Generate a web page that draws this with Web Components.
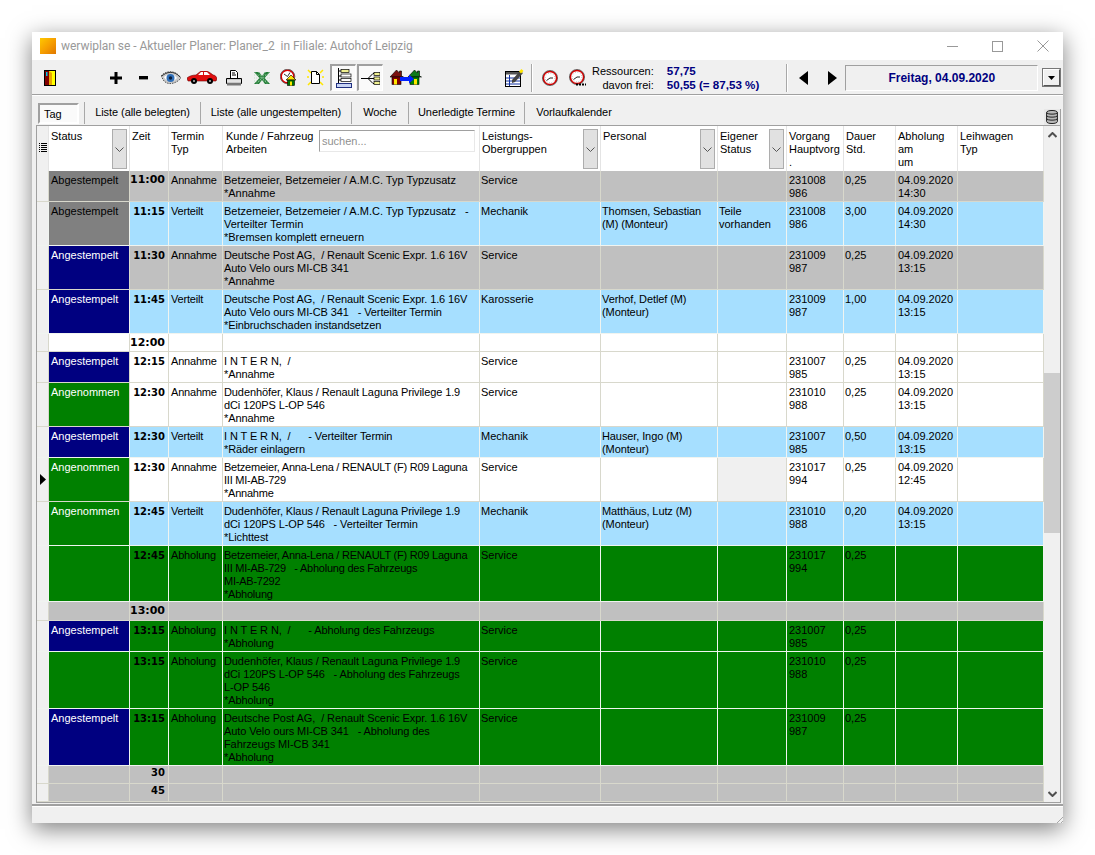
<!DOCTYPE html>
<html>
<head>
<meta charset="utf-8">
<title>werwiplan se</title>
<style>
  html, body { margin: 0; background: #fff; }
  body { padding: 32px; font: 11px "Liberation Sans", Arial, sans-serif; color: #000; }
</style>
</head>
<body>
<wp-window>
  <wp-titlebar slot="title">werwiplan se - Aktueller Planer: Planer_2&nbsp; in Filiale: Autohof Leipzig</wp-titlebar>
  <wp-toolbar slot="toolbar"></wp-toolbar>
  <wp-tabs slot="tabs"></wp-tabs>
  <wp-grid slot="grid"></wp-grid>
</wp-window>

<script>
// small pixel-like toolbar icons
const ICONS = {
  door: '<svg width="12" height="16" viewBox="0 0 12 16"><rect x=".5" y=".5" width="11" height="15" fill="#ffff00" stroke="#000"/><rect x="1" y="1" width="4" height="14" fill="#800000"/><rect x="2" y="2" width="1.500" height="4" fill="#00c8e8"/><path d="M5 1l3 2v12H5z" fill="#c00000" opacity=".35"/></svg>',
  plus: '<svg width="12" height="12" viewBox="0 0 12 12"><path d="M4.500 0h3v4.500H12v3H7.500V12h-3V7.500H0v-3h4.500z" fill="#000"/></svg>',
  minus: '<svg width="9" height="4" viewBox="0 0 9 4"><rect width="9" height="3.400" fill="#000"/></svg>',
  eye: '<svg width="20" height="16" viewBox="0 0 20 16"><path d="M0 6C4 1 14-1 20 8c-4 5-12 8-17 3z" fill="#c9c9c9" stroke="#555" stroke-width="1" stroke-dasharray="1.500 1"/><path d="M3 7c3-3 10-4 13 1-3 4-10 5-13-1z" fill="#fff"/><circle cx="9.500" cy="8" r="4" fill="#2f6fb8"/><circle cx="9.500" cy="8" r="1.700" fill="#0b1d3a"/><path d="M1 6C5 2 13 0 19 7" fill="none" stroke="#333"/></svg>',
  car: '<svg width="30" height="13" viewBox="0 0 30 13"><path d="M0 7c2-2 6-3 9-3l5-4h6c2 1 5 3 6 4 2 0 4 2 4 4l-1 2H1z" fill="#e01010" stroke="#600" stroke-width=".6"/><path d="M11 4l3-3h2v3zM17 1h3l3 3h-6z" fill="#fff"/><circle cx="7" cy="10" r="3" fill="#000"/><circle cx="7" cy="10" r="1" fill="#bbb"/><circle cx="23" cy="10" r="3" fill="#000"/><circle cx="23" cy="10" r="1" fill="#bbb"/></svg>',
  printer: '<svg width="16" height="16" viewBox="0 0 16 16"><path d="M4.500.5h5l2 2v6h-7z" fill="#fff" stroke="#000"/><path d="M6 3h3M6 5h4" stroke="#000"/><path d="M.5 8.500h15v5H.5z" fill="#c8c8c8" stroke="#000"/><path d="M1 11h14" stroke="#fff"/><rect x="1" y="13" width="14" height="2.500" fill="#777"/></svg>',
  excel: '<svg width="16" height="14" viewBox="0 0 16 14"><path d="M0 1h5l3 4 3-4h5l-5.500 6 5.500 6h-5l-3-4-3 4H0l5.500-6z" fill="#1f7a33"/><path d="M1 1.500l13 11M15 1.500L2 12.500M4 1l9 12M12 1L3 13M0 4h16M0 7h16M0 10h16" stroke="#a9d8b2" stroke-width=".7" stroke-dasharray="1 1.200"/></svg>',
  clockhouse: '<svg width="17" height="17" viewBox="0 0 17 17"><circle cx="7.500" cy="7.500" r="6.300" fill="#fff" stroke="#d80000" stroke-width="1.500"/><circle cx="7.500" cy="7.500" r="7.300" fill="none" stroke="#000" stroke-width=".5"/><path d="M7.500 7.500L4 5M7.500 7.500L10 3.500" stroke="#333"/><path d="M6 11l5-5 5 5z" fill="#ffe600" stroke="#000" stroke-width=".6"/><rect x="7.500" y="11" width="7" height="5.500" fill="#007000" stroke="#000" stroke-width=".6"/><rect x="10" y="12.500" width="2" height="4" fill="#ffe600"/></svg>',
  newdoc: '<svg width="17" height="17" viewBox="0 0 17 17"><path d="M1 1l3 3M16 1l-3 3M1 16l3-3M16 16l-3-3M0 8h2M15 8h2" stroke="#ffe600" stroke-width="1.500"/><path d="M4.500 2.500h5l3 3v9h-8z" fill="#fff" stroke="#000"/><path d="M9.500 2.500v3h3" fill="none" stroke="#000"/></svg>',
  tree: '<svg width="17" height="20" viewBox="0 0 17 20"><path d="M3.500 0v17M3.500 3H6M3.500 8H6M3.500 12H6" stroke="#000" fill="none"/><rect x="6" y="1.500" width="8" height="3" fill="#f0f090" stroke="#000" stroke-width=".7"/><rect x="6" y="6" width="10" height="3" fill="#fff" stroke="#000" stroke-width=".7"/><rect x="6" y="10.500" width="10" height="3" fill="#fff" stroke="#000" stroke-width=".7"/><rect x="1.500" y="15.500" width="15" height="4" fill="#c8d4f4" stroke="#203080"/></svg>',
  branch: '<svg width="19" height="13" viewBox="0 0 19 13"><path d="M0 6.500h7M7 6.500l5-5h1M7 6.500h6M7 6.500l5 5h1" stroke="#000" fill="none"/><rect x="13" y=".5" width="6" height="3" fill="#f0f090" stroke="#000" stroke-width=".7"/><rect x="13" y="5" width="6" height="3" fill="#f0f090" stroke="#000" stroke-width=".7"/><rect x="13" y="9.500" width="6" height="3" fill="#f0f090" stroke="#000" stroke-width=".7"/></svg>',
  houses: '<svg width="32" height="15" viewBox="0 0 32 15"><path d="M0 7l6.500-7 3 3V1h2v5l2 1z" fill="#7a1010" stroke="#000" stroke-width=".6"/><rect x="2" y="7" width="9" height="7.500" fill="#800000" stroke="#000" stroke-width=".6"/><rect x="4" y="9" width="3" height="5.500" fill="#ffe600"/><path d="M18 7l6.500-7 3 3V1h2v5l2 1z" fill="#0e7a1a" stroke="#000" stroke-width=".6"/><rect x="20" y="7" width="9" height="7.500" fill="#008000" stroke="#000" stroke-width=".6"/><rect x="24" y="9" width="3" height="5.500" fill="#ffe600"/><path d="M10 7h9V4.500l5 4.500-5 4.500V11h-9z" fill="#0020ff"/></svg>',
  notes: '<svg width="19" height="19" viewBox="0 0 19 19"><rect x=".5" y="3.500" width="15" height="15" fill="#fff" stroke="#000"/><rect x="1" y="4" width="14" height="2.500" fill="#555"/><path d="M4.500 7v11M1 10h14M1 13h14M1 16h14" stroke="#1030a0"/><path d="M7 12L15 3l3 2-8 9-3 1z" fill="#444"/><path d="M14 3.500L16.500 1l2 2-2.500 2.500z" fill="#ffe600"/></svg>',
  clock: '<svg width="16" height="16" viewBox="0 0 16 16"><circle cx="8" cy="8" r="6.600" fill="#fff" stroke="#d80000" stroke-width="1.500"/><circle cx="8" cy="8" r="7.600" fill="none" stroke="#000" stroke-width=".5"/><circle cx="8" cy="8" r="4.800" fill="none" stroke="#999" stroke-width=".8" stroke-dasharray=".8 1.700"/><path d="M8 8L4.500 10.500M8 8h3" stroke="#222"/></svg>',
  clockdots: '<svg width="17" height="17" viewBox="0 0 17 17"><circle cx="8" cy="8" r="6.600" fill="#fff" stroke="#d80000" stroke-width="1.500"/><circle cx="8" cy="8" r="7.600" fill="none" stroke="#000" stroke-width=".5"/><circle cx="8" cy="8" r="4.800" fill="none" stroke="#999" stroke-width=".8" stroke-dasharray=".8 1.700"/><path d="M8 8L4.500 10.500M8 8h3" stroke="#222"/><path d="M7 15.500h10" stroke="#000" stroke-width="2" stroke-dasharray="2 1"/></svg>',
  left: '<svg width="9" height="14" viewBox="0 0 9 14"><path d="M9 0v14L0 7z" fill="#000"/></svg>',
  right: '<svg width="9" height="14" viewBox="0 0 9 14"><path d="M0 0v14l9-7z" fill="#000"/></svg>',
  db: '<svg width="12" height="14" viewBox="0 0 12 14"><path d="M.6 2.500c0-2.700 10.800-2.700 10.800 0v9c0 2.700-10.800 2.700-10.800 0z" fill="#b8b8b8" stroke="#222"/><path d="M.6 2.500c0 2.200 10.800 2.200 10.800 0M.6 5.500c0 2.200 10.800 2.200 10.800 0M.6 8.500c0 2.200 10.800 2.200 10.800 0" fill="none" stroke="#222"/></svg>',
  chevron: '<svg width="9" height="5" viewBox="0 0 9 5"><path d="M.5.500l4 4 4-4" fill="none" stroke="#555"/></svg>'
};

class WpWindow extends HTMLElement {
  constructor() {
    super();
    this.attachShadow({ mode: 'open' });
    this.shadowRoot.innerHTML = `
      <style>
        :host {
          display: flex;
          flex-direction: column;
          width: 1031px;
          height: 791px;
          background: #f0f0f0;
          box-shadow: 0 6px 22px rgba(0,0,0,.5);
        }
        .status {
          flex: 1;
          position: relative;
          margin-top: 1px;
          border-top: 2px solid #a0a0a0;
          box-shadow: inset 0 1px 0 #fff;
        }
        .grip {
          position: absolute;
          right: 0;
          bottom: 0;
          width: 9px;
          height: 9px;
          background: repeating-linear-gradient(135deg, transparent 0 2px, #a8a8a8 2px 3px);
          clip-path: polygon(100% 0, 100% 100%, 0 100%);
        }
      </style>
      <slot name="title"></slot>
      <slot name="toolbar"></slot>
      <slot name="tabs"></slot>
      <slot name="grid"></slot>
      <div class="status"><div class="grip"></div></div>
    `;
  }
}

class WpTitlebar extends HTMLElement {
  constructor() {
    super();
    this.attachShadow({ mode: 'open' });
    this.shadowRoot.innerHTML = `
      <style>
        :host {
          display: flex;
          align-items: center;
          height: 28px;
          background: #fff;
          color: #999;
          font: 12px Roboto, sans-serif;
          letter-spacing: -.04px;
        }
        .logo {
          width: 16px;
          height: 16px;
          margin: 0 5px 0 8px;
          background: linear-gradient(135deg, #ffc800, #f7a000 50%, #e07800);
        }
        .text { flex: 1; white-space: nowrap; }
        .ctl { width: 45px; height: 28px; display: flex; align-items: center; justify-content: center; }
      </style>
      <div class="logo"></div>
      <div class="text"><slot></slot></div>
      <div class="ctl"><svg width="11" height="11"><path d="M0 5.500h11" stroke="#999"/></svg></div>
      <div class="ctl" style="margin-right:3px"><svg width="11" height="11"><rect x=".5" y=".5" width="10" height="10" fill="none" stroke="#999"/></svg></div>
      <div class="ctl" style="width:40px"><svg width="12" height="12"><path d="M.5.500l11 11M11.500.500l-11 11" stroke="#999"/></svg></div>
    `;
  }
}

class WpToolbar extends HTMLElement {
  constructor() {
    super();
    this.attachShadow({ mode: 'open' });
    // each entry: icon name, box left edge in window coords, box width
    const tools = [
      ['door', 10, 16], ['plus', 76, 16], ['minus', 103, 16], ['eye', 128, 22], ['car', 154, 32],
      ['printer', 193, 18], ['excel', 222, 16], ['clockhouse', 247, 18], ['newdoc', 274, 18]
    ];
    let x = 0;
    const btn = tools.map(([n, left, w]) => {
      const h = `<div class="tool" style="margin-left:${left - x}px;width:${w}px">${ICONS[n]}</div>`;
      x = left + w;
      return h;
    }).join('');
    this.shadowRoot.innerHTML = `
      <style>
        :host {
          display: flex;
          align-items: center;
          height: 35px;
          box-sizing: border-box;
          padding-top: 1px;
          border-bottom: 1px solid #a0a0a0;
          background: #f0f0f0;
          font: 11px "Liberation Sans", Arial, sans-serif;
        }
        .tool { display: flex; align-items: center; justify-content: center; flex: none; }
        .pressed {
          width: 26px;
          height: 27px;
          box-sizing: border-box;
          border: 1px solid;
          border-color: #a0a0a0 #fff #fff #a0a0a0;
          border-width: 2px 1px 1px 2px;
          background: #fafafa;
        }
        .sep { width: 1px; height: 28px; background: #a8a8a8; box-shadow: 1px 0 0 #fff; flex: none; }
        .res { display: grid; grid-template-columns: auto auto; column-gap: 13px; line-height: 14px; margin-left: 6px; }
        .res span:nth-child(odd) { text-align: right; }
        .res b { color: #000080; font-weight: bold; font-size: 11.6px; }
        .date {
          width: 193px;
          height: 26px;
          box-sizing: border-box;
          margin-left: 8px;
          border: 1px solid;
          border-color: #a0a0a0 #fff #fff #a0a0a0;
          display: flex;
          align-items: center;
          justify-content: center;
          color: #000080;
          font-weight: bold;
          font-size: 12px;
        }
        .combo {
          width: 19px;
          height: 19px;
          box-sizing: border-box;
          margin-left: 4px;
          border: 2px solid;
          border-color: #fff #555 #555 #fff;
          outline: 1px solid #777;
          outline-offset: -1px;
          background: #f0f0f0;
          display: flex;
          align-items: center;
          justify-content: center;
        }
      </style>
      ${btn}
      <div class="tool pressed" style="margin-left:6px">${ICONS.tree}</div>
      <div class="tool pressed" style="margin-left:1px">${ICONS.branch}</div>
      <div class="tool" style="margin-left:6px;width:34px">${ICONS.houses}</div>
      <div class="tool" style="margin-left:81px;width:20px">${ICONS.notes}</div>
      <div class="sep" style="margin-left:7px"></div>
      <div class="tool" style="margin-left:10px;width:16px">${ICONS.clock}</div>
      <div class="tool" style="margin-left:11px;width:17px">${ICONS.clockdots}</div>
      <div class="res">
        <span>Ressourcen:</span><b>57,75</b>
        <span>davon frei:</span><b>50,55 (= 87,53 %)</b>
      </div>
      <div class="sep" style="margin-left:27px"></div>
      <div class="tool" style="margin-left:12px;width:9px">${ICONS.left}</div>
      <div class="tool" style="margin-left:20px;width:9px">${ICONS.right}</div>
      <div class="date">Freitag, 04.09.2020</div>
      <div class="combo"><svg width="7" height="4"><path d="M0 0h7L3.500 4z" fill="#000"/></svg></div>
    `;
  }
}

class WpTabs extends HTMLElement {
  constructor() {
    super();
    this.attachShadow({ mode: 'open' });
    const tabs = ['Liste (alle belegten)', 'Liste (alle ungestempelten)', 'Woche', 'Unerledigte Termine', 'Vorlaufkalender'];
    const widths = [116, 151, 57, 116, 99];
    this.shadowRoot.innerHTML = `
      <style>
        :host {
          display: flex;
          align-items: center;
          position: relative;
          height: 30px;
          box-sizing: border-box;
          padding: 5px 0 0 6px;
          border-top: 1px solid #fff;
          background: #f0f0f0;
          font: 11px "Liberation Sans", Arial, sans-serif;
        }
        .active {
          width: 41px;
          height: 21px;
          box-sizing: border-box;
          border: 2px solid;
          border-color: #a0a0a0 #fff #fff #a0a0a0;
          background: #fafafa;
          padding-left: 4px;
          line-height: 19px;
          margin-right: 5px;
        }
        .tab {
          box-sizing: border-box;
          height: 22px;
          line-height: 20px;
          text-align: center;
          white-space: nowrap;
          letter-spacing: -.06px;
          border-left: 1px solid #a8a8a8;
        }
        .tab:last-of-type { border-right: 1px solid #a8a8a8; }
        .db {
          position: absolute;
          right: 2px;
          bottom: 0;
          width: 16px;
          height: 16px;
          background: #e8e8e8;
          border-right: 1px solid #a0a0a0;
          display: flex;
          align-items: center;
          justify-content: center;
        }
      </style>
      <div class="active">Tag</div>
      ${tabs.map((t, i) => `<div class="tab" style="width:${widths[i]}px">${t}</div>`).join('')}
      <div class="db">${ICONS.db}</div>
    `;
  }
}

class WpHeader extends HTMLElement {
  constructor() {
    super();
    this.attachShadow({ mode: 'open' });
    const drop = `<div class="drop">${ICONS.chevron}</div>`;
    this.shadowRoot.innerHTML = `
      <style>
        :host {
          display: grid;
          grid-template-columns: var(--cols);
          height: 45px;
          background: #fff;
          line-height: 13px;
          color: #000;
        }
        div.c {
          position: relative;
          box-sizing: border-box;
          padding: 4px 0 0 2px;
          border-right: 1px solid #e4e4e4;
          white-space: pre;
          overflow: hidden;
        }
        .ind { background: #f0f0f0; display: flex; align-items: center; justify-content: center; }
        .drop {
          position: absolute;
          right: 2px;
          top: 3px;
          width: 15px;
          height: 40px;
          box-sizing: border-box;
          background: #e1e1e1;
          border: 1px solid #adadad;
          display: flex;
          align-items: center;
          justify-content: center;
        }
        input {
          position: absolute;
          left: 96px;
          top: 4px;
          width: 156px;
          height: 22px;
          box-sizing: border-box;
          border: 1px solid;
          border-color: #a0a0a0 #e8e8e8 #e8e8e8 #a0a0a0;
          padding: 0 2px;
          font: inherit;
          color: #000;
          background: #fff;
        }
        input::placeholder { color: #909090; opacity: 1; }
      </style>
      <div class="c ind" style="padding:0 0 3px"><svg width="8" height="9"><path d="M0 .5h1M2 .5h6M0 2.500h1M2 2.500h6M0 4.500h1M2 4.500h6M0 6.500h1M2 6.500h6M0 8.500h1M2 8.500h6" stroke="#000"/></svg></div>
      <div class="c">Status${drop}</div>
      <div class="c">Zeit</div>
      <div class="c">Termin\nTyp</div>
      <div class="c" style="padding-left:3px">Kunde / Fahrzeug\nArbeiten<input placeholder="suchen..."></div>
      <div class="c">Leistungs-\nObergruppen${drop}</div>
      <div class="c">Personal${drop}</div>
      <div class="c">Eigener\nStatus${drop}</div>
      <div class="c">Vorgang\nHauptvorg\n.</div>
      <div class="c">Dauer\nStd.</div>
      <div class="c">Abholung\nam\num</div>
      <div class="c">Leihwagen\nTyp</div>
    `;
  }
}

const ROW_BG = { grey: '#c0c0c0', blue: '#a6dfff', white: '#fff', green: '#008000' };
const STATUS = {
  Abgestempelt: ['#808080', '#000'],
  Angestempelt: ['#000080', '#fff'],
  Angenommen: ['#008000', '#fff']
};

class WpRow extends HTMLElement {
  constructor() {
    super();
    this.attachShadow({ mode: 'open' });
  }

  set data(d) {
    const line = (d.bg === 'green' || d.bg === 'blue') ? '#f0f4f0' : '#d8d8cc';
    const st = STATUS[d.status];
    const cell = (t, extra, cls) => `<div class="c ${cls || ''}" ${extra ? `style="${extra}"` : ''}>${t || ''}</div>`;
    // ks: letter-spacing of the customer column, names differ in width against the original font
    const ks = d.ks === undefined ? -0.1 : d.ks;
    this.shadowRoot.innerHTML = `
      <style>
        :host {
          display: grid;
          grid-template-columns: var(--cols);
          background: ${ROW_BG[d.bg]};
          line-height: 13px;
          color: #000;
        }
        .c {
          box-sizing: border-box;
          padding: 3px 0 0 2px;
          border-right: 1px solid ${line};
          border-bottom: 1px solid ${line};
          white-space: pre;
          overflow: hidden;
        }
        .tight { padding-left: 1px; }
        .narrow { letter-spacing: -.1px; }
        .typ { letter-spacing: -.2px; }
        .ind { background: #f0f0f0; padding: 0; display: flex; align-items: center; justify-content: center; }
        .time {
          text-align: right;
          padding: 3px 3px 0 0;
          font: bold 10px "DejaVu Sans", sans-serif;
          line-height: 13px;
        }
        .hour { font-size: 11px; padding: 2px 3px 0 0; }
        .quarter { padding-top: 0; }
      </style>
      <div class="c ind">${d.mark ? '<svg width="6" height="11"><path d="M0 0v11l6-5.500z" fill="#000"/></svg>' : ''}</div>
      ${cell(d.status, st ? `background:${st[0]};color:${st[1]}` : '')}
      <div class="c time ${d.hour ? 'hour' : ''} ${d.time.length === 2 ? 'quarter' : ''}">${d.time}</div>
      ${cell(d.typ, '', 'typ')}
      ${cell(d.kunde, `letter-spacing:${ks}px`, 'tight')}
      ${cell(d.leist, '', 'tight')}
      ${cell(d.pers, '', 'tight narrow')}
      ${cell(d.eigen, d.mark ? 'background:#f0f0f0' : '', 'tight')}
      ${cell(d.vorg)}
      ${cell(d.dauer, '', 'tight')}
      ${cell(d.abh)}
      ${cell('')}
    `;
    this.style.height = d.h + 'px';
  }
}

const AB = 'Abgestempelt', AG = 'Angestempelt', AN = 'Angenommen';
const ROWS = [
  { h: 31, bg: 'grey', ks: 0, status: AB, time: '11:00', hour: 1, typ: 'Annahme', kunde: 'Betzemeier, Betzemeier / A.M.C. Typ Typzusatz\n*Annahme', leist: 'Service', vorg: '231008\n986', dauer: '0,25', abh: '04.09.2020\n14:30' },
  { h: 44, bg: 'blue', ks: 0, status: AB, time: '11:15', typ: 'Verteilt', kunde: 'Betzemeier, Betzemeier / A.M.C. Typ Typzusatz   -\nVerteilter Termin\n*Bremsen komplett erneuern', leist: 'Mechanik', pers: 'Thomsen, Sebastian\n(M) (Monteur)', eigen: 'Teile\nvorhanden', vorg: '231008\n986', dauer: '3,00', abh: '04.09.2020\n14:30' },
  { h: 44, bg: 'grey', status: AG, time: '11:30', typ: 'Annahme', kunde: 'Deutsche Post AG,  / Renault Scenic Expr. 1.6 16V\nAuto Velo ours MI-CB 341\n*Annahme', leist: 'Service', vorg: '231009\n987', dauer: '0,25', abh: '04.09.2020\n13:15' },
  { h: 44, bg: 'blue', status: AG, time: '11:45', typ: 'Verteilt', kunde: 'Deutsche Post AG,  / Renault Scenic Expr. 1.6 16V\nAuto Velo ours MI-CB 341   - Verteilter Termin\n*Einbruchschaden instandsetzen', leist: 'Karosserie', pers: 'Verhof, Detlef (M)\n(Monteur)', vorg: '231009\n987', dauer: '1,00', abh: '04.09.2020\n13:15' },
  { h: 18, bg: 'white', time: '12:00', hour: 1 },
  { h: 31, bg: 'white', status: AG, time: '12:15', typ: 'Annahme', kunde: 'I N T E R N,  /\n*Annahme', leist: 'Service', vorg: '231007\n985', dauer: '0,25', abh: '04.09.2020\n13:15' },
  { h: 44, bg: 'white', status: AN, time: '12:30', typ: 'Annahme', kunde: 'Dudenhöfer, Klaus / Renault Laguna Privilege 1.9\ndCi 120PS L-OP 546\n*Annahme', leist: 'Service', vorg: '231010\n988', dauer: '0,25', abh: '04.09.2020\n13:15' },
  { h: 31, bg: 'blue', status: AG, time: '12:30', typ: 'Verteilt', kunde: 'I N T E R N,  /      - Verteilter Termin\n*Räder einlagern', leist: 'Mechanik', pers: 'Hauser, Ingo (M)\n(Monteur)', vorg: '231007\n985', dauer: '0,50', abh: '04.09.2020\n13:15' },
  { h: 44, bg: 'white', ks: -0.23, status: AN, mark: 1, time: '12:30', typ: 'Annahme', kunde: 'Betzemeier, Anna-Lena / RENAULT (F) R09 Laguna\nIII MI-AB-729\n*Annahme', leist: 'Service', vorg: '231017\n994', dauer: '0,25', abh: '04.09.2020\n12:45' },
  { h: 44, bg: 'blue', status: AN, time: '12:45', typ: 'Verteilt', kunde: 'Dudenhöfer, Klaus / Renault Laguna Privilege 1.9\ndCi 120PS L-OP 546   - Verteilter Termin\n*Lichttest', leist: 'Mechanik', pers: 'Matthäus, Lutz (M)\n(Monteur)', vorg: '231010\n988', dauer: '0,20', abh: '04.09.2020\n13:15' },
  { h: 56, bg: 'green', ks: -0.23, time: '12:45', typ: 'Abholung', kunde: 'Betzemeier, Anna-Lena / RENAULT (F) R09 Laguna\nIII MI-AB-729   - Abholung des Fahrzeugs\nMI-AB-7292\n*Abholung', leist: 'Service', vorg: '231017\n994', dauer: '0,25' },
  { h: 19, bg: 'grey', time: '13:00', hour: 1 },
  { h: 31, bg: 'green', status: AG, time: '13:15', typ: 'Abholung', kunde: 'I N T E R N,  /      - Abholung des Fahrzeugs\n*Abholung', leist: 'Service', vorg: '231007\n985', dauer: '0,25' },
  { h: 57, bg: 'green', time: '13:15', typ: 'Abholung', kunde: 'Dudenhöfer, Klaus / Renault Laguna Privilege 1.9\ndCi 120PS L-OP 546   - Abholung des Fahrzeugs\nL-OP 546\n*Abholung', leist: 'Service', vorg: '231010\n988', dauer: '0,25' },
  { h: 57, bg: 'green', status: AG, time: '13:15', typ: 'Abholung', kunde: 'Deutsche Post AG,  / Renault Scenic Expr. 1.6 16V\nAuto Velo ours MI-CB 341   - Abholung des\nFahrzeugs MI-CB 341\n*Abholung', leist: 'Service', vorg: '231009\n987', dauer: '0,25' },
  { h: 18, bg: 'grey', time: '30' },
  { h: 18, bg: 'grey', time: '45' }
];

class WpScrollbar extends HTMLElement {
  constructor() {
    super();
    this.attachShadow({ mode: 'open' });
    this.shadowRoot.innerHTML = `
      <style>
        :host {
          display: flex;
          flex-direction: column;
          width: 17px;
          background: #f0f0f0;
        }
        .arrow { height: 17px; display: flex; align-items: center; justify-content: center; flex: none; }
        .track { flex: 1; padding-top: 230px; }
        .thumb { height: 160px; background: #cdcdcd; }
      </style>
      <div class="arrow"><svg width="9" height="6"><path d="M.5 5L4.500 1l4 4" fill="none" stroke="#505050" stroke-width="2"/></svg></div>
      <div class="track"><div class="thumb"></div></div>
      <div class="arrow"><svg width="9" height="6"><path d="M.5 1l4 4 4-4" fill="none" stroke="#505050" stroke-width="2"/></svg></div>
    `;
  }
}

class WpGrid extends HTMLElement {
  constructor() {
    super();
    this.attachShadow({ mode: 'open' });
    this.shadowRoot.innerHTML = `
      <style>
        :host {
          display: flex;
          height: 678px;
          box-sizing: border-box;
          margin: 0 2px 0 4px;
          border: 1px solid #a0a0a0;
          background: #fff;
          --cols: 12px 81px 39px 54px 257px 121px 117px 69px 57px 52px 62px 86px;
        }
        .rows { width: 1007px; flex: none; }
      </style>
      <div class="rows"><wp-header></wp-header></div>
      <wp-scrollbar></wp-scrollbar>
    `;
    const box = this.shadowRoot.querySelector('.rows');
    for (const d of ROWS) {
      const r = document.createElement('wp-row');
      r.data = d;
      box.appendChild(r);
    }
  }
}

customElements.define('wp-row', WpRow);
customElements.define('wp-header', WpHeader);
customElements.define('wp-scrollbar', WpScrollbar);
customElements.define('wp-grid', WpGrid);
customElements.define('wp-tabs', WpTabs);
customElements.define('wp-toolbar', WpToolbar);
customElements.define('wp-titlebar', WpTitlebar);
customElements.define('wp-window', WpWindow);
</script>
</body>
</html>
